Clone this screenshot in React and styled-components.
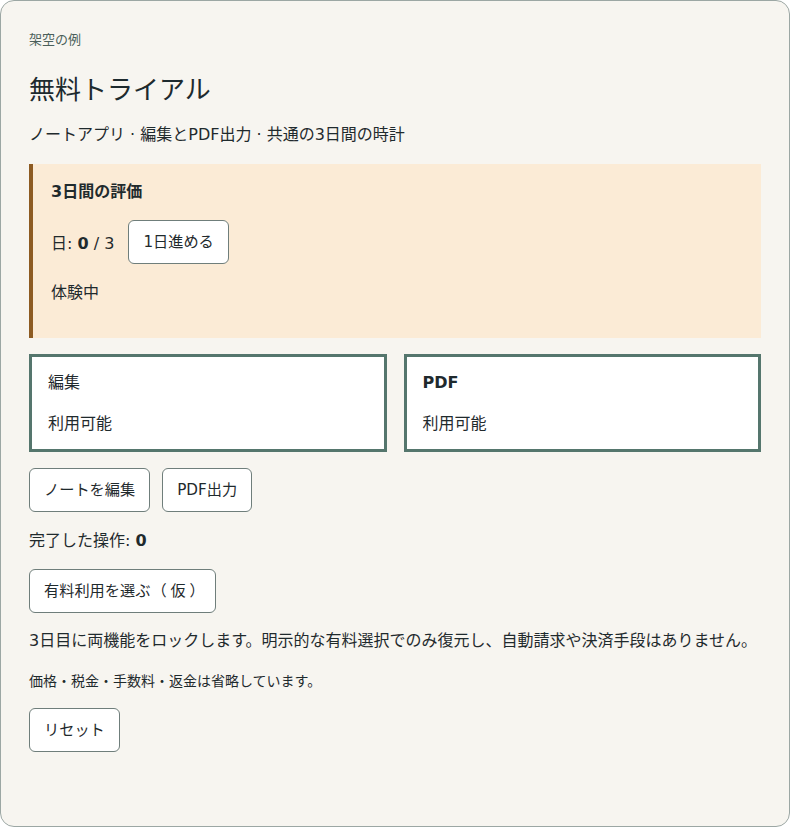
import React from "react";
import styled, { createGlobalStyle } from "styled-components";

const Global = createGlobalStyle`
  html, body { margin: 0; padding: 0; }
  body {
    font-family: "DejaVu Sans", "Noto Sans CJK JP", sans-serif;
    color: #1f2a2d;
    background: #ffffff;
  }
  * { box-sizing: border-box; }
`;

const Card = styled.main`
  min-height: 827px;
  background: #f7f5f0;
  border: 1px solid #9ca7a4;
  border-radius: 14px;
  padding: 29px 28px 28px;
  display: flex;
  flex-direction: column;
`;

const Eyebrow = styled.p`
  margin: 0;
  font-size: 13px;
  line-height: 20px;
  color: #4b5f5a;
`;

const Title = styled.h1`
  margin: 23px 0 0;
  font-size: 26px;
  line-height: 34px;
  font-weight: 400;
  color: #1d2a2e;
`;

const Text = styled.p`
  margin: ${(p) => p.$mt ?? 16}px 0 0;
  font-size: ${(p) => p.$size ?? 16}px;
  line-height: ${(p) => p.$lh ?? 24}px;
  font-weight: ${(p) => (p.$bold ? 700 : 400)};
`;

const Trial = styled.section`
  margin-top: 17px;
  background: #fbebd6;
  border-left: 4px solid #8d5b22;
  padding: 16px 18px 33px;
`;

const Row = styled.div`
  display: flex;
  align-items: center;
  gap: 14px;
  margin-top: 16px;
`;

const Button = styled.button`
  font-family: inherit;
  font-size: 15.2px;
  line-height: 22px;
  color: #1f2a2d;
  background: #ffffff;
  border: 1px solid #6f7e7b;
  border-radius: 6px;
  padding: 10px 14px;
  cursor: pointer;
`;

const Paren = styled.span`
  font-feature-settings: "halt";
  padding: 0 0.25em 0 ${(p) => (p.$open ? "calc(0.25em + 5px)" : "0.25em")};
`;

const Grid = styled.div`
  margin-top: 16px;
  display: grid;
  grid-template-columns: 1fr 1fr;
  gap: 17px;
`;

const Feature = styled.div`
  background: #ffffff;
  border: 3px solid #55766d;
  padding: 14px 16px 13px;
`;

const FeatureName = styled.h3`
  margin: 0;
  font-size: 16px;
  line-height: 24px;
  font-weight: ${(p) => (p.$bold ? 700 : 400)};
`;

const Actions = styled.div`
  display: flex;
  gap: 12px;
  margin-top: 16px;
`;

const Block = styled.div`
  margin-top: 16px;
  display: flex;
`;

export default function App() {
  return (
    <>
      <Global />
      <Card>
        <Eyebrow>架空の例</Eyebrow>
        <Title>無料トライアル</Title>
        <Text>ノートアプリ · 編集とPDF出力 · 共通の3日間の時計</Text>
        <Trial>
          <Text $mt={0} $bold>3日間の評価</Text>
          <Row>
            <span>
              日: <b>0</b> / 3
            </span>
            <Button>1日進める</Button>
          </Row>
          <Text $mt={17}>体験中</Text>
        </Trial>
        <Grid>
          <Feature>
            <FeatureName>編集</FeatureName>
            <Text $mt={17}>利用可能</Text>
          </Feature>
          <Feature>
            <FeatureName $bold>PDF</FeatureName>
            <Text $mt={17}>利用可能</Text>
          </Feature>
        </Grid>
        <Actions>
          <Button>ノートを編集</Button>
          <Button>PDF出力</Button>
        </Actions>
        <Text $mt={17}>
          完了した操作: <b>0</b>
        </Text>
        <Block>
          <Button>
            有料利用を選ぶ<Paren $open>（</Paren>仮<Paren>）</Paren>
          </Button>
        </Block>
        <Text>3日目に両機能をロックします。明示的な有料選択でのみ復元し、自動請求や決済手段はありません。</Text>
        <Text $size={14} $lh={21} $mt={18}>価格・税金・手数料・返金は省略しています。</Text>
        <Block>
          <Button>リセット</Button>
        </Block>
      </Card>
    </>
  );
}
